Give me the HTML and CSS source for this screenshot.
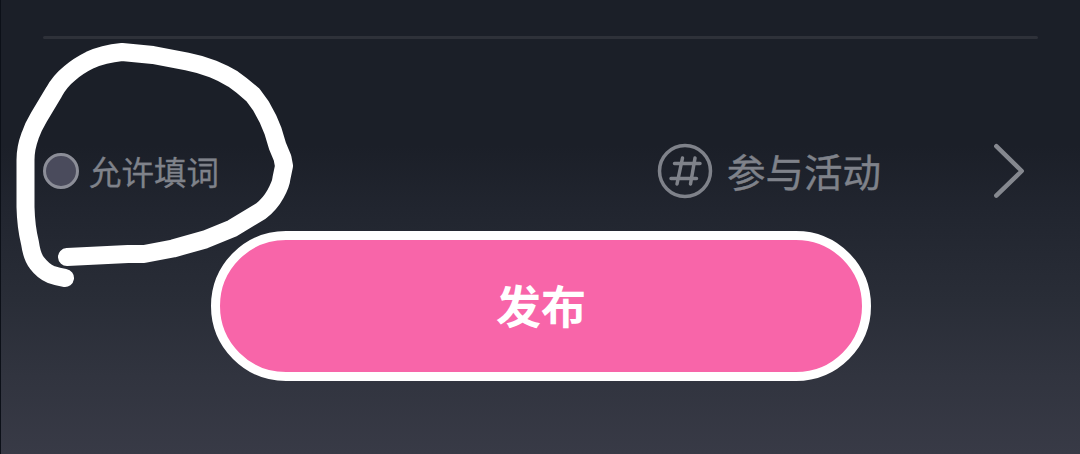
FILE: index.html
```html
<!DOCTYPE html>
<html lang="zh-CN">
<head>
    <meta charset="UTF-8">
    <meta name="viewport" content="width=device-width, initial-scale=1.0">
    <title>发布</title>
    <link rel="stylesheet" href="styles.css">
</head>
<body>
    <main class="publish">
        <hr class="divider">

        <div class="options">
            <label class="allow">
                <span class="radio"></span>
                <span class="allow-text">允许填词</span>
            </label>
            <a class="activity">
                <svg class="hash" viewBox="0 0 56 56">
                    <circle cx="28" cy="28" r="25.5"/>
                    <path d="M25.5 15L20 41M38 15L33.5 41M17.5 20.5H43M14 35.5H39.5"/>
                </svg>
                <span class="activity-text">参与活动</span>
                <svg class="arrow" viewBox="0 0 34 56">
                    <path d="M5.3 3.2L30.7 28L5.3 52.6"/>
                </svg>
            </a>
        </div>

        <button class="submit">发布</button>
    </main>

    <!-- hand drawn circle over the option -->
    <svg class="marker" viewBox="0 0 300 300">
        <path d="M67 257L128 254H144L173 248.500L205 239.500L232 228.500L261 211Q270 204 275.500 194Q281 184 281.500 178L284 166L282.500 158L277.500 146L273 131L268 119L261 106L253 95Q243 86 233 79Q223 73 213 69Q200 64 187 61.500L153 55L122 52Q103 54 90 60Q78 66 70 73Q60 81 54 92L39 117Q33 127 30 136Q25.500 148 25.500 160V207Q26 227 30 243Q32 257 37 263Q43 271 51 274.500Q58 277 65 278"/>
    </svg>
</body>
</html>
```

FILE: styles.css
```css
* {
    box-sizing: border-box;
}

body {
    margin: 0;
    height: 454px;
    overflow: hidden;
    font-family: "Noto Sans CJK SC", sans-serif;
    background: linear-gradient(#1b1f28 0%, #1b1f28 32%, #21252f 46%, #292d37 66%, #31343f 83%, #383a46 100%);
}

.publish {
    height: 454px;
    padding: 36px 42px 0;
    border-left: 1px solid #0c1018;
}

.divider {
    height: 3px;
    margin: 0;
    border: 0;
    border-radius: 2px;
    background-color: #2e3139;
}

.options {
    display: flex;
    justify-content: space-between;
    align-items: center;
    height: 56px;
    margin-top: 104px;
    color: #7f828a;
}

.allow {
    display: flex;
    align-items: center;
    gap: 10px;
}

.radio {
    width: 36px;
    height: 36px;
    border: 3px solid #8c8e98;
    border-radius: 50%;
    background-color: #4a4b5c;
}

.allow-text {
    font-size: 32.5px;
    line-height: 48px;
    -webkit-text-stroke: 0.3px #7f828a;
}

.activity {
    display: flex;
    align-items: center;
    padding-right: 13px;
}

svg {
    fill: none;
    stroke-linecap: round;
    stroke-linejoin: round;
}

.hash {
    width: 56px;
    height: 56px;
    stroke: #7f828a;
    stroke-width: 3.5;
}

.activity-text {
    margin-left: 14px;
    padding-bottom: 2px;
    font-size: 38.5px;
    line-height: 56px;
    -webkit-text-stroke: 0.4px #7f828a;
}

.arrow {
    width: 34px;
    height: 56px;
    margin-left: 110px;
    stroke: #85888f;
    stroke-width: 4.5;
}

.submit {
    display: block;
    width: 660px;
    height: 150px;
    margin: 32px 0 0 168px;
    padding: 0 0 2px;
    border: 9px solid #fff;
    border-radius: 75px;
    background-color: #f865a9;
    color: #fff;
    font-family: inherit;
    font-size: 45px;
    font-weight: bold;
    line-height: 60px;
}

.marker {
    position: absolute;
    top: 0;
    left: 0;
    width: 300px;
    height: 300px;
    stroke: #fff;
    stroke-width: 18;
}
```
